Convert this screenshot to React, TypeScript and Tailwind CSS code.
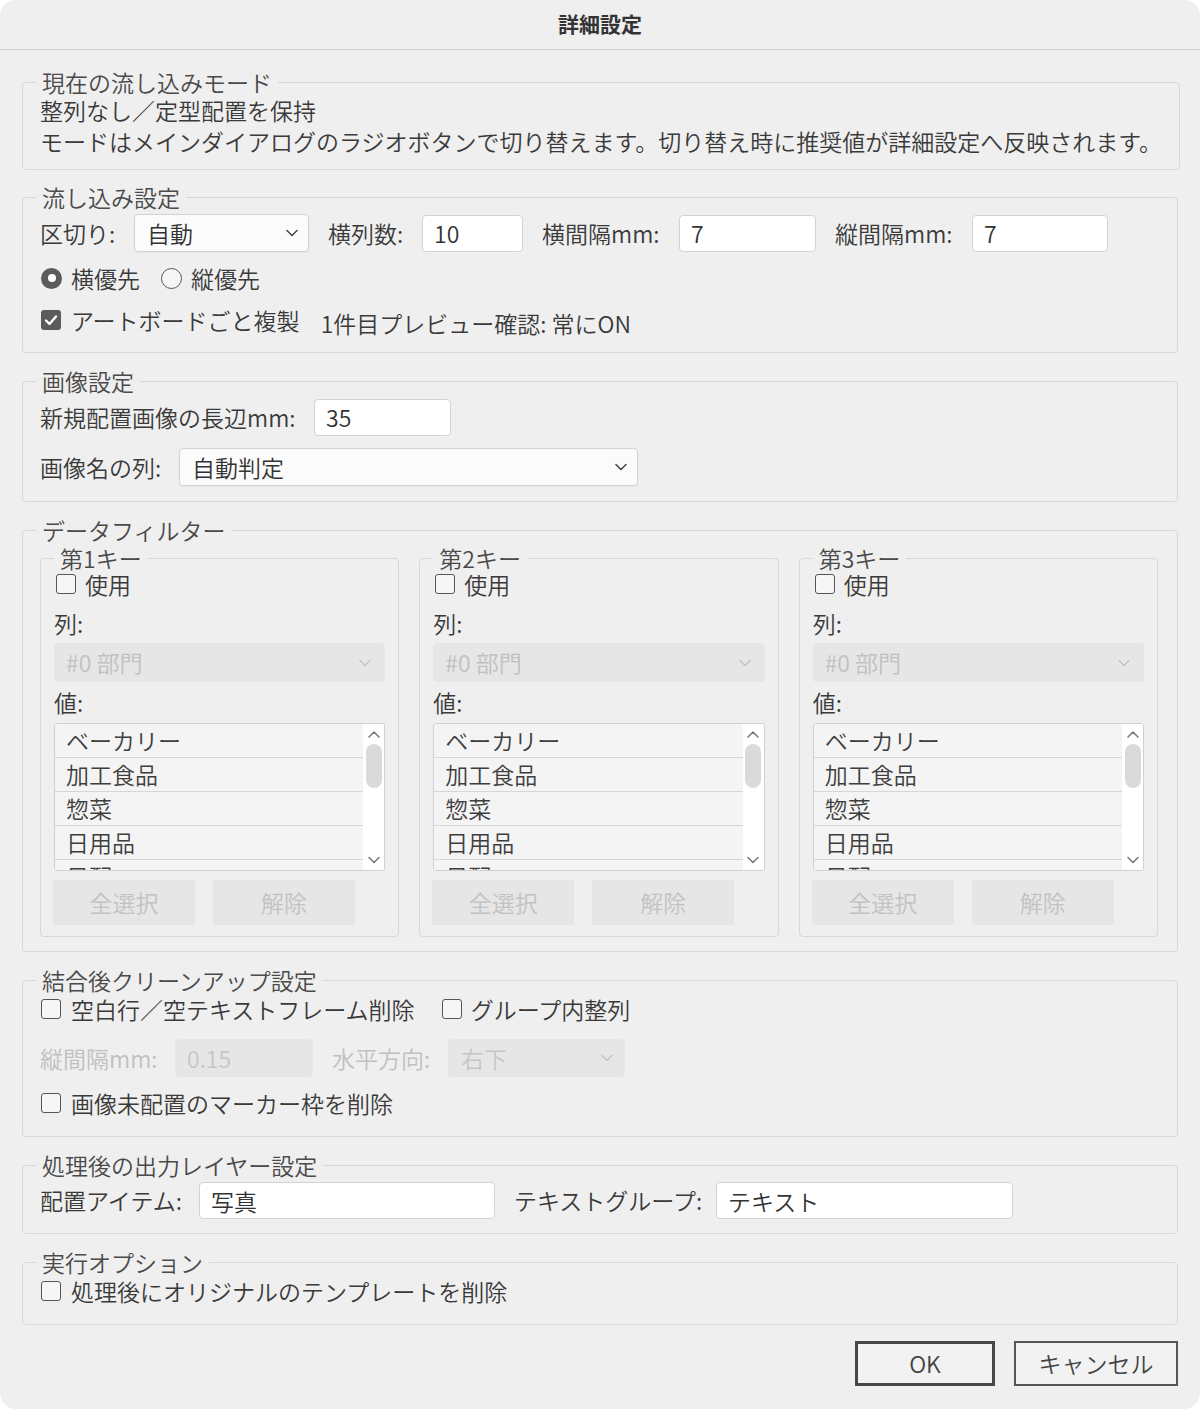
import React from "react";

function Chevron({ color = "#555", up = false }: { color?: string; up?: boolean }) {
  return (
    <svg width="12" height="8" viewBox="0 0 12 8" fill="none" className="shrink-0 block">
      <path
        d={up ? "M1 7 L6 2 L11 7" : "M1 1.5 L6 6.5 L11 1.5"}
        stroke={color}
        strokeWidth="1.5"
        strokeLinecap="round"
        strokeLinejoin="round"
      />
    </svg>
  );
}

function CheckBox({ checked = false }: { checked?: boolean }) {
  if (checked) {
    return (
      <span className="w-[20px] h-[20px] rounded-[3px] bg-[#5b5b5b] flex items-center justify-center shrink-0">
        <svg width="14" height="12" viewBox="0 0 14 12" fill="none">
          <path d="M2 6.5 L5.5 10 L12 2.5" stroke="#ffffff" strokeWidth="2.4" strokeLinecap="round" strokeLinejoin="round" />
        </svg>
      </span>
    );
  }
  return <span className="block w-[20px] h-[20px] rounded-[3px] border-[1.5px] border-[#555555] bg-[#f6f6f6] shrink-0" />;
}

function Radio({ checked = false }: { checked?: boolean }) {
  if (checked) {
    return (
      <span className="w-[21px] h-[21px] rounded-full bg-[#5b5b5b] flex items-center justify-center shrink-0">
        <span className="block w-[8px] h-[8px] rounded-full bg-white" />
      </span>
    );
  }
  return <span className="block w-[21px] h-[21px] rounded-full border-[1.5px] border-[#555555] bg-[#f6f6f6] shrink-0" />;
}

function Group({
  legend,
  children,
  className,
}: {
  legend: string;
  children: React.ReactNode;
  className: string;
}) {
  return (
    <fieldset className={className}>
      <legend className="ml-[-4px] px-[6px] text-[23px] leading-[26px] text-[#4a4a4a]">{legend}</legend>
      {children}
    </fieldset>
  );
}

function TextBox({ value, className }: { value: string; className: string }) {
  return (
    <input
      readOnly
      value={value}
      className={`h-[37px] bg-white border border-[#d3d3d3] rounded-[4px] pl-[11px] text-[23px] text-[#333] outline-none shrink-0 ${className}`}
    />
  );
}

function SelectBox({ value, className }: { value: string; className: string }) {
  return (
    <div
      className={`h-[38px] bg-[#fbfbfb] border border-[#d3d3d3] rounded-[4px] pl-[12px] pr-[10px] flex items-center justify-between text-[23px] text-[#333] shadow-[0_1px_1px_rgba(0,0,0,0.04)] shrink-0 ${className}`}
    >
      <span>{value}</span>
      <Chevron color="#444" />
    </div>
  );
}

const items = ["ベーカリー", "加工食品", "惣菜", "日用品", "日配"];

function KeyPanel({ title }: { title: string }) {
  return (
    <fieldset className="border border-[#d7d7d7] rounded-[4px] pl-[13px] pr-[13px] pb-[11px] min-w-0">
      <legend className="px-[6px] text-[23px] leading-[26px] text-[#4a4a4a]">{title}</legend>
      <div className="h-[26px] flex items-center">
        <span className="ml-[2px] flex">
          <CheckBox />
        </span>
        <span className="ml-[9px]">使用</span>
      </div>
      <div className="mt-[13px] h-[26px] flex items-center">列:</div>
      <div className="mt-[7px] h-[39px] rounded-[4px] bg-[#e6e6e6] pl-[12px] pr-[14px] flex items-center justify-between text-[#c0c0c0]">
        <span>#0 部門</span>
        <Chevron color="#c4c4c4" />
      </div>
      <div className="mt-[7px] h-[26px] flex items-center">値:</div>
      <div className="mt-[8px] h-[148px] border border-[#d0d0d0] rounded-[3px] overflow-hidden flex bg-white">
        <div className="flex-1 bg-[#f4f4f4] overflow-hidden">
          {items.map((it) => (
            <div key={it} className="h-[34px] border-b border-[#d6d6d6] pl-[11px] flex items-center text-[#3e3e3e]">
              {it}
            </div>
          ))}
        </div>
        <div className="w-[21px] bg-white flex flex-col items-center pt-[6px]">
          <Chevron color="#777" up />
          <div className="mt-[6px] w-[16px] h-[44px] rounded-full bg-[#dadada]" />
          <div className="flex-1" />
          <div className="mb-[6px]">
            <Chevron color="#777" />
          </div>
        </div>
      </div>
      <div className="mt-[9px] ml-[-1px] flex gap-[18px]">
        <div className="w-[142px] h-[45px] bg-[#e6e6e6] flex items-center justify-center text-[#c2c2c2]">全選択</div>
        <div className="w-[142px] h-[45px] bg-[#e6e6e6] flex items-center justify-center text-[#c2c2c2]">解除</div>
      </div>
    </fieldset>
  );
}

export default function App() {
  const fs = "border border-[#d7d7d7] rounded-[4px] pl-[17px] pr-[17px]";
  return (
    <div className="w-[1200px] h-[1409px] bg-white overflow-hidden font-['Noto_Sans_CJK_JP','Noto_Sans',sans-serif] font-[350] text-[23px] text-[#3a3a3a]">
      <div className="w-full h-full rounded-[16px] bg-[#efefef] flex flex-col">
        <div className="h-[50px] border-b border-[#d4d4d4] flex items-center justify-center">
          <span className="text-[21px] font-bold text-[#333] mt-[-2px]">詳細設定</span>
        </div>

        <div className="px-[22px] pt-[19px] flex flex-col">
          {/* Section 1 */}
          <Group legend="現在の流し込みモード" className={`${fs} pb-[12px]`}>
            <div className="h-[31px] flex items-center">整列なし／定型配置を保持</div>
            <div className="h-[31px] flex items-center whitespace-nowrap">
              モードはメインダイアログのラジオボタンで切り替えます。切り替え時に推奨値が詳細設定へ反映されます。
            </div>
          </Group>

          {/* Section 2 */}
          <Group legend="流し込み設定" className={`${fs} pb-[17px] mt-[14px]`}>
            <div className="mt-[3px] h-[40px] flex items-center">
              <span className="w-[94px] shrink-0">区切り:</span>
              <SelectBox value="自動" className="w-[175px]" />
              <span className="ml-[19px] w-[94px] shrink-0">横列数:</span>
              <TextBox value="10" className="w-[101px]" />
              <span className="ml-[19px] w-[137px] shrink-0">横間隔mm:</span>
              <TextBox value="7" className="w-[137px]" />
              <span className="ml-[19px] w-[137px] shrink-0">縦間隔mm:</span>
              <TextBox value="7" className="w-[136px]" />
            </div>
            <div className="mt-[10px] h-[30px] flex items-center">
              <span className="ml-[1px] flex">
                <Radio checked />
              </span>
              <span className="ml-[9px]">横優先</span>
              <span className="ml-[21px] flex">
                <Radio />
              </span>
              <span className="ml-[9px]">縦優先</span>
            </div>
            <div className="mt-[12px] h-[30px] flex items-center">
              <span className="ml-[1px] flex">
                <CheckBox checked />
              </span>
              <span className="ml-[10px]">アートボードごと複製</span>
              <span className="ml-[21px] mt-[6px]">1件目プレビュー確認: 常にON</span>
            </div>
          </Group>

          {/* Section 3 */}
          <Group legend="画像設定" className={`${fs} pb-[15px] mt-[15px]`}>
            <div className="mt-[4px] h-[38px] flex items-center">
              <span className="w-[274px] shrink-0">新規配置画像の長辺mm:</span>
              <TextBox value="35" className="w-[137px]" />
            </div>
            <div className="mt-[12px] h-[38px] flex items-center">
              <span className="w-[139px] shrink-0">画像名の列:</span>
              <SelectBox value="自動判定" className="w-[459px]" />
            </div>
          </Group>

          {/* Section 4 */}
          <Group legend="データフィルター" className={`${fs} pr-[19px] pb-[14px] mt-[15px]`}>
            <div className="mt-[2px] grid grid-cols-3 gap-[20px]">
              <KeyPanel title="第1キー" />
              <KeyPanel title="第2キー" />
              <KeyPanel title="第3キー" />
            </div>
          </Group>

          {/* Section 5 */}
          <Group legend="結合後クリーンアップ設定" className={`${fs} pb-[18px] mt-[15px]`}>
            <div className="mt-[1px] h-[30px] flex items-center">
              <span className="ml-[1px] flex">
                <CheckBox />
              </span>
              <span className="ml-[10px]">空白行／空テキストフレーム削除</span>
              <span className="ml-[27px] flex">
                <CheckBox />
              </span>
              <span className="ml-[9px]">グループ内整列</span>
            </div>
            <div className="mt-[15px] h-[38px] flex items-center text-[#c0c0c0]">
              <span className="w-[135px] shrink-0">縦間隔mm:</span>
              <div className="w-[138px] h-[38px] rounded-[4px] bg-[#e6e6e6] pl-[12px] flex items-center text-[#c6c6c6]">0.15</div>
              <span className="ml-[19px] w-[116px] shrink-0">水平方向:</span>
              <div className="w-[177px] h-[38px] rounded-[4px] bg-[#e6e6e6] pl-[13px] pr-[12px] flex items-center justify-between text-[#c6c6c6]">
                <span>右下</span>
                <Chevron color="#c4c4c4" />
              </div>
            </div>
            <div className="mt-[11px] h-[30px] flex items-center">
              <span className="ml-[1px] flex">
                <CheckBox />
              </span>
              <span className="ml-[10px]">画像未配置のマーカー枠を削除</span>
            </div>
          </Group>

          {/* Section 6 */}
          <Group legend="処理後の出力レイヤー設定" className={`${fs} pb-[14px] mt-[15px]`}>
            <div className="mt-[4px] h-[37px] flex items-center">
              <span className="w-[159px] shrink-0">配置アイテム:</span>
              <TextBox value="写真" className="w-[296px]" />
              <span className="ml-[19px] w-[202px] shrink-0">テキストグループ:</span>
              <TextBox value="テキスト" className="w-[297px]" />
            </div>
          </Group>

          {/* Section 7 */}
          <Group legend="実行オプション" className={`${fs} pb-[18px] mt-[15px]`}>
            <div className="mt-[1px] h-[30px] flex items-center">
              <span className="ml-[1px] flex">
                <CheckBox />
              </span>
              <span className="ml-[10px]">処理後にオリジナルのテンプレートを削除</span>
            </div>
          </Group>

          <div className="mt-[16px] flex justify-end gap-[19px]">
            <button className="w-[140px] h-[45px] border-[3px] border-[#474747] bg-[#f2f2f2] flex items-center justify-center text-[23px] text-[#444]">
              OK
            </button>
            <button className="w-[164px] h-[45px] border-2 border-[#555555] bg-[#f2f2f2] flex items-center justify-center text-[23px] text-[#444]">
              キャンセル
            </button>
          </div>
        </div>
      </div>
    </div>
  );
}
